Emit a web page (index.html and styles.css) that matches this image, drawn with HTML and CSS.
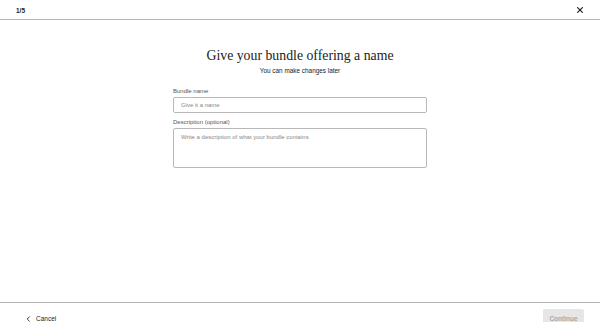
FILE: index.html
```html
<!DOCTYPE html>
<html lang="en">
<head>
<meta charset="utf-8">
<title>Bundle name</title>
<link rel="stylesheet" href="styles.css">
</head>
<body>
<div class="page">
  <header class="topbar">
    <span class="step">1/5</span>
    <button class="close" aria-label="Close">
      <svg width="6" height="6" viewBox="0 0 6 6"><path d="M0.6 0.6L5.4 5.4M5.4 0.6L0.6 5.4" stroke="#222" stroke-width="1.2" stroke-linecap="round"/></svg>
    </button>
  </header>
  <main class="content">
    <h1 class="title">Give your bundle offering a name</h1>
    <p class="subtitle">You can make changes later</p>
    <form class="form">
      <label class="field">
        <span class="label">Bundle name</span>
        <input class="input" type="text" placeholder="Give it a name">
      </label>
      <label class="field">
        <span class="label">Description (optional)</span>
        <textarea class="textarea" placeholder="Write a description of what your bundle contains"></textarea>
      </label>
    </form>
  </main>
  <footer class="bottombar">
    <button class="cancel">
      <svg width="5" height="6" viewBox="0 0 5 6"><path d="M3.4 0.8L1.2 3L3.4 5.2" fill="none" stroke="#333" stroke-width="1" stroke-linecap="round" stroke-linejoin="round"/></svg>
      <span>Cancel</span>
    </button>
    <button class="continue" disabled>Continue</button>
  </footer>
</div>
</body>
</html>
```
FILE: styles.css
```css
* { box-sizing: border-box; }
html, body { margin: 0; padding: 0; background: #fff; }
body { font-family: "Liberation Sans", Arial, sans-serif; color: #222; }
.page { width: 600px; height: 322px; display: flex; flex-direction: column; overflow: hidden; }
.topbar { height: 20px; flex: none; display: flex; align-items: center; justify-content: space-between; padding: 1px 17px 0 16px; border-bottom: 1px solid #b3b3b3; }
.step { font-size: 6.5px; font-weight: 600; color: #222; }
.close { border: 0; background: none; padding: 0; display: flex; }
.content { flex: 1; display: flex; flex-direction: column; align-items: center; padding-top: 27px; }
.title { margin: 0; font-family: "Liberation Serif", "Times New Roman", serif; font-weight: 400; font-size: 13.8px; line-height: 18px; color: #222; }
.subtitle { margin: 1px 0 0; font-size: 6.4px; line-height: 9px; color: #222; }
.form { width: 254px; margin-top: 12px; display: flex; flex-direction: column; gap: 5px; }
.field { display: flex; flex-direction: column; gap: 2px; }
.label { font-size: 6px; line-height: 8px; color: #555; }
.input, .textarea { width: 100%; border: 1px solid #b8b8b8; border-radius: 2px; font-family: "Liberation Sans", Arial, sans-serif; font-size: 6px; color: #222; padding: 0 7px; outline: none; }
.input { height: 16px; }
.textarea { height: 40px; resize: none; padding-top: 5px; }
.input::placeholder, .textarea::placeholder { color: #888; }
.bottombar { height: 20px; flex: none; display: flex; align-items: flex-start; justify-content: space-between; border-top: 1px solid #b3b3b3; padding: 6px 16px 0 26px; }
.cancel { border: 0; background: none; padding: 0; margin-top: 6px; display: flex; align-items: center; gap: 5px; font-family: "Liberation Sans", Arial, sans-serif; font-size: 6.5px; line-height: 8px; font-weight: 500; color: #222; }
.continue { border: 0; border-radius: 2px; background: #e6e6e6; color: #a8a8a8; width: 41px; height: 18px; font-family: "Liberation Sans", Arial, sans-serif; font-size: 6.5px; font-weight: 600; padding: 0; }
```
